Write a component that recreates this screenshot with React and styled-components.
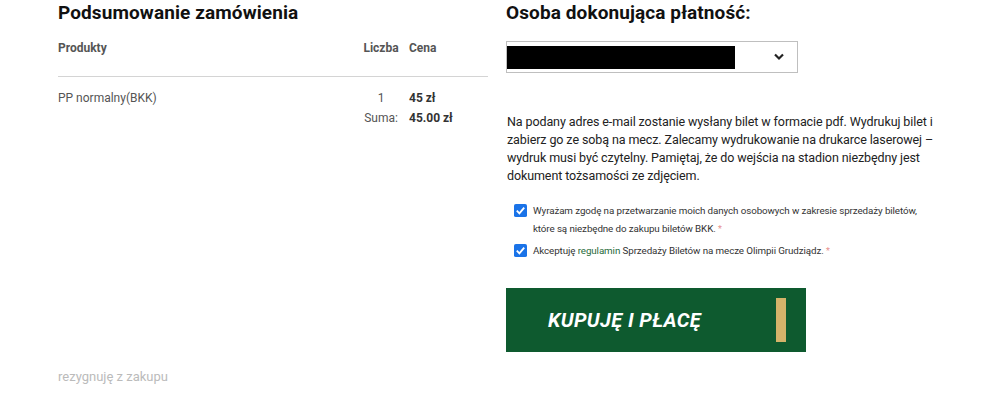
import React from "react";
import styled, { createGlobalStyle } from "styled-components";

const GlobalStyle = createGlobalStyle`
    body {
        margin: 0;
        background: #FFFFFF;
        font-family: Roboto, "Liberation Sans", sans-serif;
        color: #222222;
    }
`;

function App() {
    return (
        <>
            <GlobalStyle />
            <Page>
                <Summary>
                    <Title>Podsumowanie zamówienia</Title>
                    <TableHead>
                        <HeadCell>Produkty</HeadCell>
                        <HeadCell align="center">Liczba</HeadCell>
                        <HeadCell>Cena</HeadCell>
                    </TableHead>
                    <TableRow>
                        <Cell>PP normalny(BKK)</Cell>
                        <Cell align="center">1</Cell>
                        <Cell bold>45 zł</Cell>
                        <Cell />
                        <Cell align="center">Suma:</Cell>
                        <Cell bold>45.00 zł</Cell>
                    </TableRow>
                    <Spacer />
                    <Resign href="#">rezygnuję z zakupu</Resign>
                </Summary>

                <Payer>
                    <Title>Osoba dokonująca płatność:</Title>
                    <Select>
                        <Redacted />
                        <Chevron viewBox="0 0 10 8">
                            <path d="M1 1.5 L5 5.5 L9 1.5" fill="none" stroke="#222" strokeWidth="2.2" />
                        </Chevron>
                    </Select>
                    <Info>
                        Na podany adres e-mail zostanie wysłany bilet w formacie pdf. Wydrukuj bilet i
                        zabierz go ze sobą na mecz. Zalecamy wydrukowanie na drukarce laserowej –
                        wydruk musi być czytelny. Pamiętaj, że do wejścia na stadion niezbędny jest
                        dokument tożsamości ze zdjęciem.
                    </Info>
                    <Consents>
                        <Consent>
                            <Check />
                            <span>
                                Wyrażam zgodę na przetwarzanie moich danych osobowych w zakresie sprzedaży biletów,
                                <br />
                                które są niezbędne do zakupu biletów BKK. <Required>*</Required>
                            </span>
                        </Consent>
                        <Consent>
                            <Check />
                            <span>
                                Akceptuję <Link href="#">regulamin</Link> Sprzedaży Biletów na mecze Olimpii Grudziądz. <Required>*</Required>
                            </span>
                        </Consent>
                    </Consents>
                    <BuyButton>
                        <span>KUPUJĘ I PŁACĘ</span>
                        <GoldBar />
                    </BuyButton>
                </Payer>
            </Page>
        </>
    );
}

function Check() {
    return (
        <CheckBox>
            <svg viewBox="0 0 14 14" width="13" height="13">
                <rect width="14" height="14" rx="2" fill="#1a73e8" />
                <path d="M3 7.2 L5.8 10 L11 4" fill="none" stroke="#fff" strokeWidth="2" />
            </svg>
        </CheckBox>
    );
}

export default App;

const Page = styled.div`
    display: grid;
    grid-template-columns: 430px 440px;
    column-gap: 18px;
    padding-left: 58px;
    height: 408px;
    box-sizing: border-box;
`;

const Summary = styled.div`
    display: flex;
    flex-direction: column;
`;

const Title = styled.h2`
    margin: 0;
    font-size: 19px;
    line-height: 26px;
    font-weight: 700;
    color: #111111;
    letter-spacing: 0.1px;
`;

const TableHead = styled.div`
    display: grid;
    grid-template-columns: 1fr 44px 85px;
    align-items: center;
    height: 44px;
    padding-bottom: 6px;
    border-bottom: 1px solid #d4d4d4;
`;

const HeadCell = styled.div`
    font-size: 12px;
    font-weight: 700;
    color: #555555;
    text-align: ${({ align }) => align || "left"};
    &:last-child {
        padding-left: 6px;
    }
`;

const TableRow = styled.div`
    display: grid;
    grid-template-columns: 1fr 44px 85px;
    row-gap: 5px;
    padding-top: 14px;
`;

const Cell = styled.div`
    font-size: 12px;
    line-height: 15px;
    color: ${({ bold }) => (bold ? "#333333" : "#555555")};
    font-weight: ${({ bold }) => (bold ? 700 : 400)};
    text-align: ${({ align }) => align || "left"};
    &:nth-child(3n) {
        padding-left: 6px;
    }
`;

const Spacer = styled.div`
    flex: 1;
`;

const Resign = styled.a`
    font-size: 13px;
    color: #bbbbbb;
    text-decoration: none;
    margin-bottom: 24px;
`;

const Payer = styled.div`
    display: flex;
    flex-direction: column;
    align-items: flex-start;
`;

const Select = styled.div`
    margin-top: 15px;
    width: 292px;
    height: 32px;
    box-sizing: border-box;
    border: 1px solid #bfbfbf;
    display: flex;
    align-items: center;
    justify-content: space-between;
    padding-right: 13px;
`;

const Redacted = styled.div`
    width: 228px;
    height: 23px;
    background: #000000;
`;

const Chevron = styled.svg`
    width: 10px;
    height: 8px;
`;

const Info = styled.p`
    margin: 40px 0 0 1px;
    width: 440px;
    font-size: 12.5px;
    line-height: 18px;
    color: #222222;
    letter-spacing: -0.1px;
`;

const Consents = styled.div`
    margin-top: 17px;
    padding-left: 8px;
    display: flex;
    flex-direction: column;
    gap: 4px;
`;

const Consent = styled.label`
    display: flex;
    gap: 6px;
    width: 430px;
    font-size: 9.8px;
    line-height: 18px;
    letter-spacing: -0.1px;
    color: #333333;
`;

const CheckBox = styled.span`
    flex: none;
    padding-top: 2px;
    line-height: 0;
`;

const Link = styled.a`
    color: #1f6b3a;
    text-decoration: none;
`;

const Required = styled.span`
    color: #e8908e;
    font-size: 9px;
`;

const BuyButton = styled.button`
    margin-top: 28px;
    width: 300px;
    height: 64px;
    border: none;
    background: #0e5a2f;
    display: flex;
    align-items: center;
    justify-content: space-between;
    padding: 0 20px 0 42px;
    box-sizing: border-box;
    font-family: Roboto, "Liberation Sans", sans-serif;
    font-size: 20px;
    font-weight: 700;
    font-style: italic;
    color: #FFFFFF;
    letter-spacing: 0.4px;
    cursor: pointer;
`;

const GoldBar = styled.span`
    width: 10px;
    height: 44px;
    background: #d4b36a;
`;
